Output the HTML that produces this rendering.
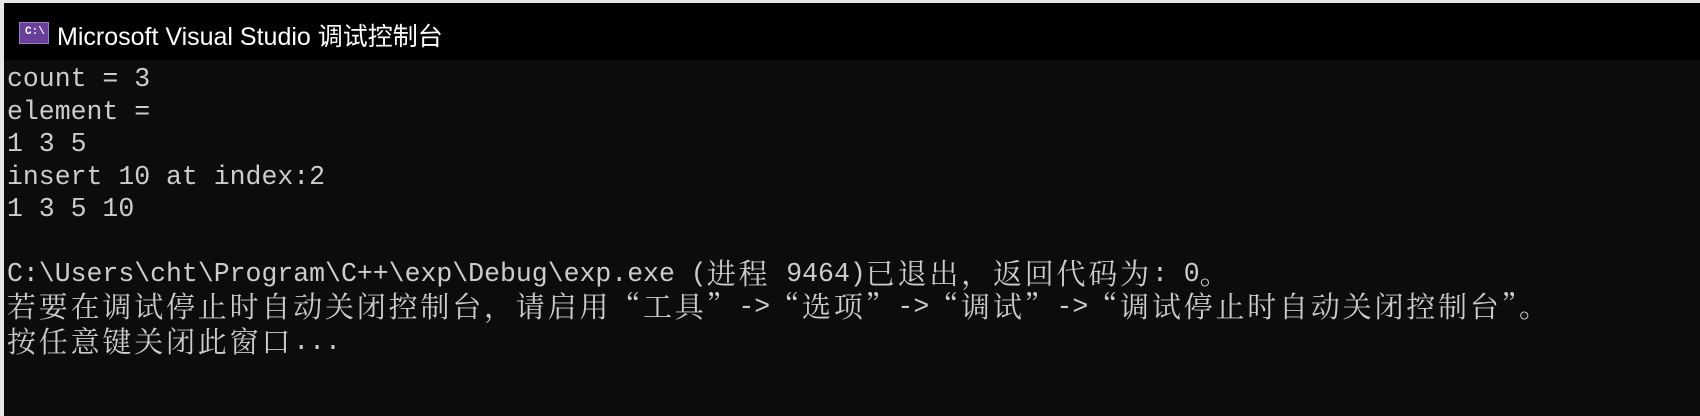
<!DOCTYPE html>
<html><head><meta charset="utf-8"><style>
html,body{margin:0;padding:0}
body{width:1700px;height:416px;background:#e6e6e6;position:relative;overflow:hidden}
#win{position:absolute;left:4px;top:3px;right:0;bottom:0;background:#0c0c0c}
#tb{position:absolute;left:0;top:0;right:0;height:57px;background:#000}
#icon{position:absolute;left:15px;top:19px;width:30px;height:22px;background:#68409c;border:1px solid #9a7cc4;box-sizing:border-box}
#icon span{position:absolute;left:5px;top:3px;color:#fff;font:bold 11px "Liberation Mono",monospace}
#title{position:absolute;left:53px;top:14px;color:#fff;font:25px "Liberation Sans","Noto Sans CJK SC",sans-serif;white-space:nowrap}
#out{position:absolute;left:3px;top:60px;color:#cccccc;font:26.5px "Liberation Mono","Noto Serif CJK SC",monospace;white-space:pre;margin:0}
#out div{height:32.5px;line-height:32.5px;overflow:visible}
.c{font-family:"Noto Serif CJK SC","Noto Sans CJK SC",serif;font-size:29px;letter-spacing:2.8px;line-height:20px;position:relative;top:3px}
#out div.l8{position:relative;top:3px}
</style></head><body>
<div id="win">
<div id="tb"><div id="icon"><span>C:\</span></div><div id="title">Microsoft Visual Studio 调试控制台</div></div>
<div id="out"><div>count = 3</div><div>element =</div><div>1 3 5</div><div>insert 10 at index:2</div><div>1 3 5 10</div><div> </div><div>C:\Users\cht\Program\C++\exp\Debug\exp.exe (<span class="c">进程</span> 9464)<span class="c">已退出，返回代码为</span>: 0<span class="c">。</span></div><div><span class="c">若要在调试停止时自动关闭控制台，请启用“工具”</span>-&gt;<span class="c">“选项”</span>-&gt;<span class="c">“调试”</span>-&gt;<span class="c">“调试停止时自动关闭控制台”。</span></div><div class="l8"><span class="c">按任意键关闭此窗口</span>...</div></div>
</div>
</body></html>
